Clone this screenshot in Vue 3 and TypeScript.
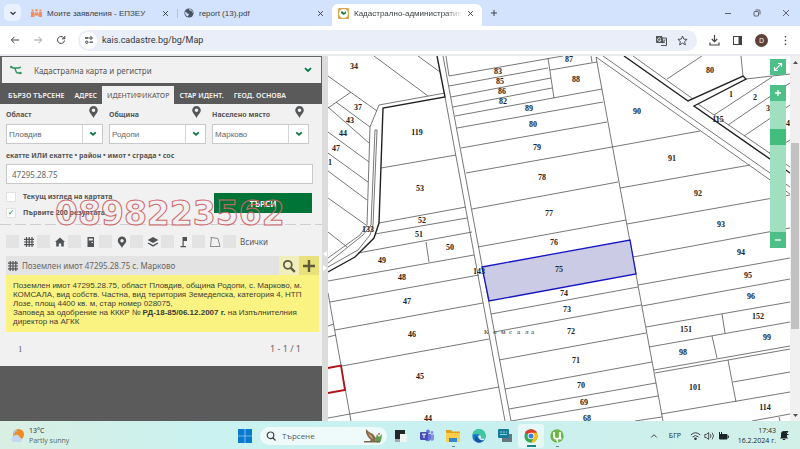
<script setup lang="ts">
import { ref } from 'vue'

interface MapLabel { t: string; x: number; y: number }

const searchTabs: string[] = ['БЪРЗО ТЪРСЕНЕ', 'АДРЕС', 'ИДЕНТИФИКАТОР', 'СТАР ИДЕНТ.', 'ГЕОД. ОСНОВА']
const activeTab = ref(2)

const places = [
  { id: 'region', label: 'Област', value: 'Пловдив' },
  { id: 'municipality', label: 'Община', value: 'Родопи' },
  { id: 'settlement', label: 'Населено място', value: 'Марково' },
]

const identifier = ref('47295.28.75')
const currentView = ref(false)
const firstResults = ref(true)
const zoomLevel = ref(76)

const kinds: string[] = ['parcel', 'house', 'door', 'pin', 'layers', 'flag', 'shape']

const parcels: [number, number, number, number][] = [
  [449, 76, 563, 56], [449, 86, 548, 68], [550, 70, 597, 62], [451, 97, 551, 78], [453, 107, 552, 88],
  [455, 116, 602, 89], [457, 128, 603, 102], [461, 148, 607, 122], [466, 173, 612, 147], [472, 209, 618, 182],
  [478, 247, 626, 220], [491, 314, 638, 287], [494, 332, 641, 305], [499, 360, 646, 333], [505, 389, 652, 362],
  [509, 409, 656, 383], [511, 421, 658, 396], [635, 421, 662, 417], [548, 58, 554, 98], [591, 56, 592, 62],
  [612, 147, 700, 131], [620, 188, 750, 165], [627, 224, 790, 195], [633, 257, 790, 228], [638, 285, 790, 258],
  [642, 306, 790, 279], [646, 327, 790, 302], [649, 347, 790, 322], [654, 370, 790, 346], [655, 373, 790, 349],
  [722, 314, 725, 333], [712, 336, 717, 358], [728, 360, 736, 402], [733, 382, 790, 372], [661, 414, 790, 392],
  [752, 421, 790, 414], [779, 417, 780, 421], [596, 57, 663, 421], [443, 56, 511, 421], [446, 56, 449, 76],
  [445, 97, 505, 421], [603, 56, 790, 187], [596, 57, 790, 194], [633, 56, 693, 99], [698, 104, 790, 167],
  [667, 79, 702, 56], [741, 56, 743, 76], [746, 79, 790, 74], [714, 115, 772, 77], [728, 125, 790, 83],
  [744, 136, 790, 105], [769, 153, 790, 140], [328, 76, 377, 111], [374, 56, 428, 96], [418, 56, 440, 72],
  [351, 92, 328, 108], [336, 102, 370, 127], [328, 107, 369, 143], [328, 132, 369, 162], [328, 153, 368, 182],
  [328, 171, 367, 200], [328, 198, 366, 225], [328, 232, 347, 247], [381, 168, 456, 155], [379, 223, 466, 207],
  [375, 234, 467, 218], [358, 253, 472, 232], [426, 242, 429, 262], [328, 281, 474, 255], [330, 302, 479, 275],
  [335, 330, 483, 303], [342, 366, 489, 339], [328, 418, 499, 387], [328, 293, 351, 421], [328, 326, 334, 324],
  [328, 337, 336, 335],
]

const labels: MapLabel[] = [
  { t: '34', x: 354, y: 66 }, { t: '37', x: 358, y: 107 }, { t: '43', x: 350, y: 120 }, { t: '44', x: 343, y: 133 },
  { t: '47', x: 336, y: 148 }, { t: '1', x: 330, y: 162 }, { t: '119', x: 417, y: 132 }, { t: '53', x: 420, y: 188 },
  { t: '52', x: 422, y: 220 }, { t: '51', x: 419, y: 234 }, { t: '133', x: 368, y: 229 }, { t: '50', x: 450, y: 247 },
  { t: '49', x: 382, y: 260 }, { t: '48', x: 402, y: 277 }, { t: '47', x: 407, y: 301 }, { t: '46', x: 412, y: 334 },
  { t: '45', x: 420, y: 376 }, { t: '44', x: 428, y: 418 }, { t: '83', x: 498, y: 71 }, { t: '85', x: 500, y: 81 },
  { t: '86', x: 502, y: 91 }, { t: '82', x: 503, y: 101 }, { t: '87', x: 569, y: 59 }, { t: '88', x: 576, y: 79 },
  { t: '89', x: 529, y: 108 }, { t: '80', x: 533, y: 124 }, { t: '79', x: 537, y: 147 }, { t: '78', x: 542, y: 177 },
  { t: '77', x: 549, y: 213 }, { t: '76', x: 554, y: 242 }, { t: '75', x: 559, y: 269 }, { t: '74', x: 564, y: 293 },
  { t: '73', x: 567, y: 309 }, { t: '72', x: 571, y: 331 }, { t: '71', x: 576, y: 360 }, { t: '70', x: 581, y: 385 },
  { t: '69', x: 584, y: 402 }, { t: '68', x: 587, y: 418 }, { t: '90', x: 637, y: 111 }, { t: '91', x: 672, y: 158 },
  { t: '92', x: 698, y: 193 }, { t: '93', x: 721, y: 224 }, { t: '94', x: 741, y: 252 }, { t: '95', x: 748, y: 275 },
  { t: '96', x: 751, y: 296 }, { t: '152', x: 758, y: 316 }, { t: '151', x: 686, y: 329 }, { t: '99', x: 767, y: 337 },
  { t: '98', x: 683, y: 352 }, { t: '101', x: 695, y: 387 }, { t: '114', x: 765, y: 407 }, { t: '80', x: 710, y: 70 },
  { t: '1', x: 731, y: 94 }, { t: '2', x: 755, y: 97 }, { t: '3', x: 768, y: 108 }, { t: '4', x: 788, y: 123 },
  { t: '115', x: 718, y: 119 }, { t: '143', x: 479, y: 271 },
]
</script>

<template>
  <div class="screen">
    <header class="tabstrip">
      <button class="tab-search" aria-label="Търсене в разделите">
        <svg width="8" height="8" viewBox="0 0 8 8"><path d="M1.5 3 4 5.3 6.5 3" class="ink" stroke-width="1.4" /></svg>
      </button>
      <div class="tab">
        <svg width="11" height="10" viewBox="0 0 11 10"><path d="M0 4h3.300v5H0zM4 4.500h3v2H4zM7.700 4H11v5H7.700zM.6 1.500h2v2h-2zM8.400 1.500h2v2h-2zM4.500 1h2v2.500h-2zM3.300 6H7.700v1.500H3.300z" fill="#f0905c" /></svg>
        <span class="tab-title">Моите заявления - ЕПЗЕУ</span>
        <button class="close" aria-label="Затваряне"><svg width="7" height="7" viewBox="0 0 7 7"><path d="M1.2 1.2 5.8 5.8M5.8 1.2 1.2 5.8" class="ink" /></svg></button>
      </div>
      <div class="tab second">
        <svg width="10" height="10" viewBox="0 0 10 10"><circle cx="5" cy="5" r="4.6" fill="#4b5360" /><path d="M1 4c2 0 2 2 4 2 0 1-1 1-1 2.6C2 8 1 6 1 4zM5 1c0 1 1 2 2 1.6C8 3 8 5 9 5c0-2-2-4-4-4z" fill="#d3e3fd" /></svg>
        <span class="tab-title">report (13).pdf</span>
        <button class="close" aria-label="Затваряне"><svg width="7" height="7" viewBox="0 0 7 7"><path d="M1.2 1.2 5.8 5.8M5.8 1.2 1.2 5.8" class="ink" /></svg></button>
      </div>
      <div class="tab active">
        <svg width="11" height="11" viewBox="0 0 11 11"><rect width="11" height="11" rx="1" fill="#dba64f" /><circle cx="5.500" cy="5.500" r="4.500" fill="#fff" /><path d="M3 3.500h2l1 1.500 2-2v2.500L5.500 7 3 5z" fill="#19804b" /></svg>
        <span class="tab-title fade">Кадастрално-административна</span>
        <button class="close" aria-label="Затваряне"><svg width="7" height="7" viewBox="0 0 7 7"><path d="M1.2 1.2 5.8 5.8M5.8 1.2 1.2 5.8" class="ink" /></svg></button>
      </div>
      <button class="new-tab" aria-label="Нов раздел"><svg width="8" height="8" viewBox="0 0 8 8"><path d="M4 1v6M1 4h6" class="ink" /></svg></button>
      <div class="window-buttons">
        <button aria-label="Намаляване"><svg width="8" height="8" viewBox="0 0 8 8"><path d="M1 4.500h6" class="ink" stroke-width=".8" /></svg></button>
        <button aria-label="Възстановяване"><svg width="8" height="8" viewBox="0 0 8 8"><rect x="1" y="2.500" width="4.500" height="4.500" rx=".8" class="ink" stroke-width=".8" /><path d="M2.500 1h3.500q1 0 1 1v3.500" class="ink" stroke-width=".8" /></svg></button>
        <button aria-label="Изход"><svg width="8" height="8" viewBox="0 0 8 8"><path d="M1 1l6 6M7 1 1 7" class="ink" stroke-width=".8" /></svg></button>
      </div>
    </header>

    <nav class="toolbar">
      <button aria-label="Назад"><svg width="10" height="10" viewBox="0 0 10 10"><path d="M9 5H1.500M4.500 1.800 1.300 5l3.200 3.200" class="ink" /></svg></button>
      <button aria-label="Напред" class="muted"><svg width="10" height="10" viewBox="0 0 10 10"><path d="M1 5h7.500M5.500 1.800 8.700 5 5.500 8.200" class="ink" /></svg></button>
      <button aria-label="Презареждане"><svg width="10" height="10" viewBox="0 0 10 10"><path d="M8.500 5.500A3.500 3.500 0 1 1 7.600 2.600L8.600 3.600M8.800 1v2.800H6" class="ink" /></svg></button>
      <div class="address">
        <span class="site"><svg width="10" height="10" viewBox="0 0 10 10"><path d="M1 3h3.500M5.500 7.200H9" class="ink" stroke-width="1.300" /><circle cx="7" cy="3" r="1.200" class="ink" /><circle cx="2.800" cy="7.200" r="1.200" class="ink" /></svg></span>
        <input class="url" aria-label="Адрес" value="kais.cadastre.bg/bg/Map">
        <button aria-label="Превод"><svg width="11" height="11" viewBox="0 0 11 11"><path d="M0 1h6l2 7H1Q0 8 0 7z" fill="#505458" /><path d="M6 3h4.500v7.500H5" class="ink" stroke-width=".9" /><path d="M4.800 3.800A1.700 1.700 0 1 0 5 5H3.600" stroke="#fff" fill="none" stroke-width=".8" /><path d="M7.500 5h2.300M8.700 5c0 2-1 3-2 3.500M7.600 6.500l2 2" class="ink" stroke-width=".6" /></svg></button>
        <button aria-label="Отметка"><svg width="11" height="11" viewBox="0 0 11 11"><path d="M5.500 1 6.800 4.100l3.300.3-2.500 2.200.8 3.300-2.900-1.800-2.900 1.800.8-3.300L.9 4.400l3.300-.3z" class="ink" stroke-width=".9" /></svg></button>
      </div>
      <div class="tools">
        <button aria-label="Изтегляния"><svg width="11" height="11" viewBox="0 0 11 11"><path d="M5.500 0v6.500M2.800 4 5.500 6.700 8.200 4M1 7.500V10h9V7.500" class="ink" stroke-width="1.200" /></svg></button>
        <button aria-label="Страничен панел"><svg width="11" height="11" viewBox="0 0 11 11"><rect x="1.500" y="1.500" width="8" height="8" class="ink" /><path d="M6.500 1.500h3v8h-3z" fill="#3f4347" /></svg></button>
        <button class="avatar" aria-label="Профил D">D</button>
        <button aria-label="Меню"><svg width="11" height="11" viewBox="0 0 11 11"><path d="M5.500 1v1.400M5.500 4.800v1.400M5.500 8.600V10" class="ink" stroke-width="1.400" /></svg></button>
      </div>
    </nav>

    <main class="content">
      <aside class="panel">
        <div class="title-bar">
          <svg width="12" height="10" viewBox="0 0 12 10"><path d="M1 1.800 3 3h6l1.800-1.200M4.500 3C6 4 5.500 8 7.500 8h3" fill="none" stroke="#2f8f60" stroke-width="1.400" /><circle cx="1.300" cy="2" r="1.200" fill="#2f8f60" /><circle cx="10.500" cy="8" r="1.200" fill="#2f8f60" /></svg>
          <h1>Кадастрална карта и регистри</h1>
          <svg width="8" height="6" viewBox="0 0 8 6"><path d="M1 1.200 4 4l3-2.800" fill="none" stroke="#087b3e" stroke-width="1.800" /></svg>
        </div>
        <div class="search-tabs" role="tablist">
          <button v-for="(tab, i) in searchTabs" :key="tab" role="tab" :class="{ on: i === activeTab }" :aria-selected="i === activeTab" @click="activeTab = i">{{ tab }}</button>
        </div>

        <form class="form" @submit.prevent>
          <div class="places">
            <div v-for="p in places" :key="p.id" class="place">
              <div class="place-head">
                <label :for="p.id">{{ p.label }}</label>
                <svg width="9" height="12" viewBox="0 0 9 12"><path fill-rule="evenodd" d="M4.500 0a4.300 4.300 0 0 1 4.300 4.300C8.800 7 6 8.500 4.500 12 3 8.500.2 7 .2 4.300A4.300 4.300 0 0 1 4.500 0zm0 2.500a1.800 1.800 0 1 0 0 3.600 1.800 1.800 0 0 0 0-3.600z" fill="#55585a" /></svg>
              </div>
              <div class="select-box">
                <select :id="p.id"><option>{{ p.value }}</option></select>
                <span class="arrow"><svg width="8" height="6" viewBox="0 0 8 6"><path d="M1.200 1.400 4 3.800l2.800-2.400" fill="none" stroke="#087b3e" stroke-width="1.800" /></svg></span>
              </div>
            </div>
          </div>
          <label class="id-label" for="identifier">екатте ИЛИ екатте • район • имот • сграда • сос</label>
          <input id="identifier" v-model="identifier" class="id-input" type="text">
          <div class="actions">
            <div class="checks">
              <label><input v-model="currentView" type="checkbox" class="box">Текущ изглед на картата</label>
              <label><input v-model="firstResults" type="checkbox" class="box">Първите 200 резултата</label>
            </div>
            <button class="submit" type="submit">ТЪРСИ</button>
          </div>
          <span class="phone">0898223562</span>
        </form>

        <div class="filters">
          <label v-for="k in kinds" :key="k">
            <input type="checkbox" class="tile" :aria-label="k">
            <svg width="12" height="12" viewBox="0 0 12 12">
              <path v-if="k === 'parcel'" d="M3.500 1v10M6.200 1v10M9 1v10M1 3.300h10M1 6h10M1 8.700h10" fill="none" stroke="#505356" stroke-width="1.200" />
              <path v-else-if="k === 'house'" d="M6 1.500 11 6H9.800v4.500H7.200V7.500H4.800v3H2.200V6H1z" fill="#505356" />
              <path v-else-if="k === 'door'" fill-rule="evenodd" d="M2.500 1h6.500v10h-6.500zM3.800 2.500v2h4v-2zM6.500 6h1.500v1h-1.500z" fill="#505356" />
              <path v-else-if="k === 'pin'" fill-rule="evenodd" d="M6 .5A4.200 4.200 0 0 1 10.200 4.700C10.200 7.300 7.500 8.500 6 12 4.500 8.500 1.800 7.300 1.800 4.700A4.200 4.200 0 0 1 6 .5zm0 2.500a1.700 1.700 0 1 0 0 3.400A1.700 1.700 0 0 0 6 3z" fill="#505356" />
              <path v-else-if="k === 'layers'" d="M6 1 11.300 4 6 7 .7 4zM1.500 6.500 6 9l4.500-2.500.8 1L6 10.800.7 7.500z" fill="#505356" />
              <path v-else-if="k === 'flag'" d="M4.500 1h4.500v4H5.700v5H8v1.200H2.500V10h2z" fill="#505356" />
              <path v-else d="M2.500 1.500 9 2.500l2 8H1.500zM1.500 1.500h2M1 10.500h2" fill="none" stroke="#8b8d8f" />
            </svg>
          </label>
          <label><input type="checkbox" class="tile"><span>Всички</span></label>
        </div>

        <section class="result">
          <header>
            <svg width="10" height="10" viewBox="0 0 10 10"><path d="M2.200 0v10M5 0v10M7.800 0v10M0 2.200h10M0 5h10M0 7.800h10" fill="none" stroke="#505356" stroke-width="1.200" /></svg>
            <h2>Поземлен имот 47295.28.75 с. Марково</h2>
            <button class="look" aria-label="Покажи"><svg width="14" height="14" viewBox="0 0 14 14"><circle cx="5.800" cy="5.800" r="4" fill="none" stroke="#5b5a45" stroke-width="1.700" /><path d="M8.800 8.800 12.800 12.800" stroke="#5b5a45" stroke-width="2.400" /></svg></button>
            <button class="add" aria-label="Добави"><svg width="12" height="12" viewBox="0 0 12 12"><path d="M6 0v12M0 6h12" stroke="#5d5b3c" stroke-width="2.400" /></svg></button>
          </header>
          <p>Поземлен имот 47295.28.75, област Пловдив, община Родопи, с. Марково, м.<br>КОМСАЛА, вид собств. Частна, вид територия Земеделска, категория 4, НТП<br>Лозе, площ 4400 кв. м, стар номер 028075,<br>Заповед за одобрение на КККР № <b>РД-18-85/06.12.2007 г.</b> на Изпълнителния<br>директор на АГКК</p>
        </section>
        <div class="pager"><span class="page">1</span><span>1 - 1 / 1</span></div>
      </aside>

      <div class="splitter"><i class="left"></i><i class="right"></i></div>

      <section class="map">
        <svg class="plan" viewBox="328 56 462 365" preserveAspectRatio="xMinYMin slice">
          <g class="thin">
            <line v-for="(p, i) in parcels" :key="i" :x1="p[0]" :y1="p[1]" :x2="p[2]" :y2="p[3]" />
            <path d="M445 93 379 105 370 127 367 225 360 235 328 258M375 130 371 225 363 235 328 263M377 130 373 225 370 235 358 250 328 267M375 130h2" />
          </g>
          <path class="thick" d="M437 56 445 97 383 108 379 223 374 238 355 257 328 272" />
          <path class="thick" d="M624 56 688 101 743 76 746 79 694 106 790 173" />
          <path class="boundary" d="M328 368 341 365.500 345 390 328 393" />
          <path class="chosen" d="M482 267 630 240 636 274 489 301z" />
          <g class="numbers">
            <text v-for="(l, i) in labels" :key="i" :x="l.x" :y="l.y + 3">{{ l.t }}</text>
          </g>
          <text class="locality"><tspan x="484 493 501 509 517 525 531" y="334">Комсала</tspan></text>
        </svg>
        <div class="map-tools">
          <button aria-label="Цял екран"><svg width="10" height="10" viewBox="0 0 10 10"><path d="M2 8 8 2M5 1.500h3.500V5M1.500 5v3.500H5" fill="none" stroke="#fff" stroke-width="1.100" /></svg></button>
          <div class="zoomer">
            <button aria-label="Приближи"><svg width="8" height="8" viewBox="0 0 8 8"><path d="M4 1v6M1 4h6" stroke="#fff" stroke-width="1.300" /></svg></button>
            <input v-model="zoomLevel" type="range" min="0" max="100" aria-label="Мащаб">
            <button aria-label="Отдалечи"><svg width="8" height="8" viewBox="0 0 8 8"><path d="M1 4h6" stroke="#fff" stroke-width="1.300" /></svg></button>
          </div>
        </div>
      </section>

      <div class="scrollbar">
        <svg width="10" height="12" viewBox="0 0 10 12"><path d="M3 8h5L5.500 5z" fill="#505050" /></svg>
        <div class="track"><span></span><b></b><span class="rest"></span></div>
        <svg width="10" height="12" viewBox="0 0 10 12"><path d="M3 5h5L5.500 8z" fill="#505050" /></svg>
      </div>
    </main>

    <footer class="taskbar">
      <div class="weather">
        <svg width="15" height="15" viewBox="0 0 15 15"><circle cx="8.500" cy="6.500" r="5.500" fill="#f08a24" /><path d="M3 5a3 3 0 0 1 5-2 5 5 0 0 0-4 5z" fill="#a5c8ee" /><path d="M3.500 14a2.800 2.800 0 0 1 0-5.500 3.500 3.500 0 0 1 6.500 1 2.300 2.300 0 0 1 0 4.500z" fill="#c3d9f5" /></svg>
        <div><div>13°C</div><div class="sky">Partly sunny</div></div>
      </div>
      <div class="dock">
        <button class="app" aria-label="Старт"><svg width="14" height="14" viewBox="0 0 14 14"><path d="M0 0h6.700v6.700H0zM7.300 0H14v6.700H7.300zM0 7.300h6.700V14H0zM7.300 7.300H14V14H7.300z" fill="#0b78d0" /></svg></button>
        <div class="find">
          <svg width="10" height="10" viewBox="0 0 10 10"><circle cx="4.500" cy="4.300" r="3.300" class="ink" stroke-width="1.200" /><path d="M7 7l2.500 2.500" class="ink" stroke-width="1.200" /></svg>
          <input type="search" placeholder="Търсене" aria-label="Търсене">
          <svg width="20" height="16" viewBox="0 0 20 16"><path d="M3 1l3 3 4 2 3 4-1 4H5l3-2-3-3-2-4z" fill="#8b6a4b" /><path d="M5 5l4 3 1 3-3-2z" fill="#c5a57e" /><path d="M12 13l2-7 2 3 3-3-1 7q-3 3-6 0z" fill="#5f9b4a" /><circle cx="16" cy="6" r="1" fill="#d65c7c" /><path d="M1 13h16v1.500H1z" fill="#766850" /></svg>
        </div>
        <button class="app" aria-label="Изглед на задачите"><svg width="14" height="14" viewBox="0 0 14 14"><path d="M1 1h10v10H1z" fill="#242628" /><path d="M6 5h7v8H6z" fill="#f2f4f4" /><path d="M1 10h5v3H1z" fill="#a3aaae" /></svg></button>
        <button class="app" aria-label="Teams"><svg width="14" height="14" viewBox="0 0 14 14"><circle cx="8" cy="2.500" r="2" fill="#6b75dc" /><circle cx="12" cy="3.500" r="1.400" fill="#858de5" /><path d="M5 5h6v5a3.500 3.500 0 0 1-6 1z" fill="#6972d8" /><path d="M11 5.500h3v4a2 2 0 0 1-3 2z" fill="#858de5" /><rect y="3" width="8" height="8" rx="1" fill="#4650b8" /><path d="M2 5.200h4M4 5v4" stroke="#fff" /></svg></button>
        <button class="app open" aria-label="Файлове"><svg width="14" height="14" viewBox="0 0 14 14"><path d="M0 1h5l1.500 1.500H14V6H0z" fill="#e6a01b" /><path d="M0 4h14v9H0z" fill="#ffce48" /><path d="M3 9h8v4H3z" fill="#3688ce" /></svg></button>
        <button class="app" aria-label="Edge"><svg width="14" height="14" viewBox="0 0 14 14"><circle cx="7" cy="7" r="6.700" fill="#127ac7" /><path d="M.5 6A6.600 6.600 0 0 1 13.700 7c0 3-4 3-5 2 1-4-4-5-8.200-3z" fill="#42c6a0" /><path d="M5 7c0 3 3 5.500 7 4-1 1-3 2.700-6 2.500C2 12 2 8 5 7z" fill="#1a529c" /><path d="M6 7c2-2 4 0 2.700 2C10 10 13 10 13.500 7.500L12 11q-5 1-6-4z" fill="#d7f2ee" /></svg></button>
        <button class="app" aria-label="Отдалечен работен плот"><svg width="14" height="14" viewBox="0 0 14 14"><rect x="4" y="5" width="10" height="8" fill="#66767e" /><rect width="11" height="9" rx="1" fill="#167b98" /><path d="M2 3h2M5 3h2M8 3h1M2 5.500h7" stroke="#8ad7e6" /></svg></button>
        <button class="app open current" aria-label="Chrome"><svg width="14" height="14" viewBox="0 0 14 14"><circle cx="7" cy="7" r="6.700" fill="#35a853" /><path d="M7 7 1.200 3.700A6.700 6.700 0 0 1 12.800 3.700z" fill="#e33b2e" /><path d="M7 3.700h5.800A6.700 6.700 0 0 1 7 13.700L10 8.500z" fill="#f9c116" /><circle cx="7" cy="7" r="3.300" fill="#fff" /><circle cx="7" cy="7" r="2.500" fill="#3c7de6" /></svg></button>
        <button class="app open" aria-label="uTorrent"><svg width="14" height="14" viewBox="0 0 14 14"><circle cx="7" cy="7" r="6.700" fill="#70b74a" /><path d="M4 3v4q0 3 3 3 3 0 3-3V3M10 7q0 3 1.500 3M7 10q0 2 1 3.500" fill="none" stroke="#fff" stroke-width="1.700" /></svg></button>
      </div>
      <div class="tray">
        <svg class="up" width="8" height="6" viewBox="0 0 8 6"><path d="M1.200 4.500 4 1.700l2.800 2.800" class="ink" /></svg>
        <span class="lang">БГР</span>
        <svg width="11" height="10" viewBox="0 0 11 10"><path d="M.8 4q4.700-4.500 9.400 0M2.500 6q3-3 6 0" class="ink" /><circle cx="5.500" cy="7.800" r="1.300" fill="#26333a" /></svg>
        <svg width="11" height="10" viewBox="0 0 11 10"><path d="M.8 3.500h1.500L4.700 1.500v7L2.300 6.500H.8zM6.300 3.200q1.400 1.800 0 3.600M8.200 1.700q2.600 3.300 0 6.600" class="ink" stroke-width=".9" /></svg>
        <svg width="11" height="10" viewBox="0 0 11 10"><rect x="1" y="3" width="8.500" height="5.500" rx="1" fill="#1b2529" /><path d="M1.500 1v4M3.500 1v3M10.300 4.500v2.500" stroke="#1b2529" /></svg>
        <div class="clock"><div>17:43</div><div>16.2.2024 г.</div></div>
        <svg width="10" height="11" viewBox="0 0 10 11"><path d="M5 1a3 3 0 0 1 3 3v3l1 1.500H1L2 7V4a3 3 0 0 1 3-3zM3.800 9h2.400v1H3.800z" fill="#1b2529" /><path d="M6 1.500h3L6.500 4.500h3" stroke="#1b2529" fill="none" /></svg>
      </div>
    </footer>
  </div>
</template>

<style>
body { margin: 0; }
</style>

<style scoped>
* { box-sizing: border-box; }
.screen { display: flex; flex-direction: column; min-height: 100vh; font-family: "Open Sans", "Noto Sans", sans-serif; color: #3c4043; overflow: hidden; }
button { border: 0; padding: 0; margin: 0; background: none; font: inherit; color: inherit; display: flex; align-items: center; justify-content: center; cursor: pointer; }
svg { display: block; flex: none; }
.ink { fill: none; stroke: #3f4347; }

.tabstrip { display: flex; align-items: flex-end; height: 26px; background: #d3e3fd; font-family: "Liberation Sans", sans-serif; font-size: 8px; }
.tab-search { width: 17px; height: 17px; margin: 0 4px 5px; border-radius: 5px; background: #e9f1ff; }
.tab { display: flex; align-items: center; height: 26px; width: 152px; padding: 0 8px 0 6px; gap: 5px; }
.tab-title { flex: 1; white-space: nowrap; overflow: hidden; }
.close { width: 7px; height: 12px; }
.second { width: 155px; border-left: 1px solid transparent; border-image: linear-gradient(transparent 9px, #a9c4ee 9px, #a9c4ee 18px, transparent 18px) 1; }
.active { width: 150px; height: 22px; border-radius: 6px 6px 0 0; background: #fff; padding-bottom: 4px; }
.fade { mask-image: linear-gradient(90deg, #000 85%, transparent); }
.new-tab { width: 24px; height: 26px; }
.window-buttons { display: flex; margin-left: auto; }
.window-buttons button { width: 29px; height: 26px; }

.toolbar { display: flex; align-items: center; height: 30px; padding: 0 3px; background: #fff; border-bottom: 2px solid #e8eaef; }
.toolbar > button { width: 23px; height: 22px; }
.muted { opacity: .5; }
.address { display: flex; align-items: center; flex: 1; height: 21px; margin: 0 6px; padding: 0 9px 0 2px; gap: 10px; border-radius: 11px; background: #e9eef9; }
.site { display: flex; align-items: center; justify-content: center; width: 17px; height: 17px; border-radius: 50%; background: #fff; }
.url { flex: 1; min-width: 0; margin-left: -5px; padding: 0; border: 0; background: none; font: 9px Roboto, sans-serif; color: #33373b; }
.tools { display: flex; }
.tools button { width: 23px; height: 17px; }
.tools .avatar { width: 13px; height: 13px; margin: 2px 6px; border-radius: 50%; background: #5d4037; color: #fff; font-size: 7px; }

.content { display: flex; flex: 1; background: #fff; }
.panel { width: 322px; flex: none; color: #55585a; background: linear-gradient(#f1f1f1, #f1f1f1) 0 0 / 100% 310px no-repeat, #5b5b5b; font-family: "Noto Sans", "Open Sans", sans-serif; }
.title-bar { display: flex; align-items: center; gap: 12px; height: 27px; padding: 0 9px 0 8px; border: 2px solid #656565; border-width: 1px 1px 0 2px; background: #f1f1f1; }
h1 { flex: 1; margin: 0; font-size: 8px; font-weight: 400; }
.search-tabs { display: flex; height: 21px; padding: 3px 0 0 3px; background: #5a5a5a; }
.search-tabs button { padding: 0 5px; font-size: 7px; font-weight: 600; color: #f3f3f3; white-space: nowrap; }
.search-tabs .on { background: #f1f1f1; color: #666; font-weight: 500; }

.form { position: relative; padding: 2px 9px 4px 6px; background: repeating-linear-gradient(90deg, #cfcfcf 0 11px, transparent 11px 15px) left bottom / 100% 1px no-repeat; font-size: 8px; }
.form label { font: 700 7px/16px "Noto Sans", sans-serif; }
.places { display: flex; gap: 6px; }
.place { width: 97px; }
.place-head { display: flex; justify-content: space-between; height: 18px; padding-right: 5px; white-space: nowrap; }
.place-head label { padding-top: 1px; }
.select-box { display: flex; height: 20px; border: 1px solid #c9c9c9; background: #fff; }
select { flex: 1; min-width: 0; appearance: none; border: 0; margin: 0; padding: 0 2px; background: none; color: #666; font: 8px "Liberation Sans", sans-serif; }
.arrow { display: flex; align-items: center; justify-content: center; width: 20px; border-left: 1px solid #d6d6d6; }
.form .id-label { display: block; padding: 4px 0 0; }
.id-input { display: block; width: 100%; max-width: 307px; height: 20px; padding: 0 5px; border: 1px solid #c9c9c9; background: #fff; color: #666; font: 8px "Noto Sans", sans-serif; }
.actions { display: flex; justify-content: space-between; padding: 5px 1px 0; }
.checks { display: flex; flex-direction: column; }
.checks label { display: flex; align-items: center; gap: 8px; }
.box { appearance: none; width: 8px; height: 8px; margin: 0; background: #fff; outline: 1px solid #e2e2e2; display: grid; place-items: center; }
.box:checked::after { content: "✓"; color: #138a4b; font: 8px/8px "DejaVu Sans", sans-serif; }
.submit { width: 98px; height: 20px; margin-top: 4px; background: #007436; color: #fff; font-size: 8px; font-weight: 600; }
.phone { position: absolute; left: 55px; top: 93px; font: bold 33px/33px "DejaVu Sans", sans-serif; color: transparent; -webkit-text-stroke: 1px #d0696b; pointer-events: none; }

.filters { display: flex; align-items: center; gap: 6px; height: 31px; padding: 2px 6px 0; font-size: 8px; }
.filters label { display: flex; align-items: center; gap: 4px; width: 25px; white-space: nowrap; }
.tile { appearance: none; flex: none; width: 13px; height: 13px; margin: 0; background: #e3e3e3; }
.tile:checked { background: #087b3e; }

.result { margin: 0 3px 0 6px; }
.result header { display: flex; align-items: center; height: 19px; padding-left: 2px; background: #e3e3e3; }
.result header button { width: 20px; height: 19px; }
.look { background: #f1eebb; }
.add { background: #e9e17c; }
h2 { flex: 1; margin: 0 0 0 4px; font-size: 8px; font-weight: 400; color: #666; }
.result p { margin: 0; padding: 6px 7px; background: #fbf381; color: #3c3c36; font: 8px/9px "Liberation Sans", sans-serif; white-space: nowrap; }
.pager { display: flex; justify-content: space-between; padding: 11px 21px 11px 18px; font: 9px/12px "Noto Sans", sans-serif; color: #666; }
.page { font-family: "Liberation Serif", serif; }

.splitter { width: 6px; flex: none; display: flex; flex-direction: column; justify-content: center; align-items: center; gap: 8px; padding-top: 44px; background: #dcdcdc; }
.splitter i { border: 3px solid transparent; width: 0; }
.splitter .left { border-left-width: 0; border-right: 4px solid #fff; }
.splitter .right { border-right-width: 0; border-left: 4px solid #fff; }

.map { position: relative; flex: 1; min-width: 0; overflow: hidden; background: #fff; }
.plan { width: 100%; height: 100%; }
.thin { fill: none; stroke: #555; stroke-width: .8; }
.thick { fill: none; stroke: #222; stroke-width: 1.4; }
.boundary { fill: none; stroke: #b01217; stroke-width: 1.8; }
.chosen { fill: #cbcbe6; stroke: #1515c4; stroke-width: 1.3; }
.numbers { font: bold 8px "Liberation Serif", serif; fill: #222; text-anchor: middle; }
.locality { font: 7px "Liberation Serif", serif; fill: #333; }
.map-tools { position: absolute; top: 3px; right: 4px; display: flex; flex-direction: column; gap: 10px; }
.map-tools button { width: 16px; height: 16px; background: #4fbf88; }
.zoomer { background: #a0dfc0; }
.zoomer input { display: block; appearance: none; writing-mode: vertical-lr; direction: rtl; width: 16px; height: 131px; margin: 0; background: none; }
.zoomer input::-webkit-slider-thumb { appearance: none; width: 16px; height: 16px; background: #43bd7e; }

.scrollbar { display: flex; flex-direction: column; width: 10px; flex: none; background: #f0f0f0; }
.track { display: flex; flex-direction: column; flex: 1; padding: 0 1px; }
.track span { flex: 75; }
.track b { flex: 186; background: #c1c1c1; }
.track .rest { flex: 80; }

.taskbar { display: flex; align-items: center; height: 29px; background: linear-gradient(90deg, #d9efe3, #caf2f0 25%, #c8f0f0 60%, #d2f0e8); font-size: 7px; line-height: 10px; color: #20292d; }
.weather { display: flex; align-items: center; gap: 4px; width: 232px; padding-left: 10px; }
.sky { color: #56666a; }
.dock { display: flex; align-items: center; }
.app { position: relative; width: 26px; height: 24px; border-radius: 3px; }
.open::after { content: ""; position: absolute; bottom: 1px; width: 3px; height: 1px; background: #6c8288; }
.current { background: #e6f8f7; }
.current::after { width: 9px; height: 2px; background: #16868c; }
.find { display: flex; align-items: center; gap: 6px; width: 127px; height: 18px; padding: 0 4px 0 6px; margin: 0 1px 0 2px; border-radius: 9px; background: #effbfa; }
.find input { flex: 1; min-width: 0; border: 0; padding: 0; background: none; font: 8px "Open Sans", sans-serif; }
.find input::placeholder { color: #4f5c60; }
.tray { display: flex; align-items: center; gap: 3px; margin-left: auto; padding-right: 11px; }
.up { margin-right: 8px; }
.lang { margin-right: 6px; }
.clock { width: 44px; text-align: right; white-space: nowrap; }
</style>
